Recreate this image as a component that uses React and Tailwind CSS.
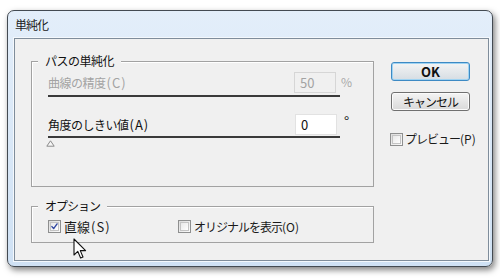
import React from "react";

const font = { fontFamily: '"Noto Sans CJK JP", "Noto Sans", sans-serif' };

function P({ children }) {
  return <span className="tracking-[1px] text-[13px] ml-[1px]">{children}</span>;
}

function Check({ checked, className = "" }) {
  return (
    <div className={"w-[13px] h-[13px] border border-[#8e8f8f] bg-gradient-to-br from-[#dcdcdc] to-[#fbfbfb] flex items-center justify-center shrink-0 " + className}>
      <div className="w-[9px] h-[9px] border border-[#c4c4c4] bg-gradient-to-br from-[#e8e8e8] to-[#ffffff] flex items-center justify-center">
        {checked && (
          <svg width="9" height="9" viewBox="0 0 9 9">
            <path d="M1.2 4.6 L3.4 7.2 L7.8 1.2" fill="none" stroke="#3047a0" strokeWidth="1.8" strokeLinecap="round" strokeLinejoin="round" />
          </svg>
        )}
      </div>
    </div>
  );
}

export default function App() {
  return (
    <div className="relative w-[500px] h-[280px] bg-white overflow-hidden pt-[10px] pl-[7px] text-[12px] text-[#1a1a1a]" style={font}>
      <div className="w-[486px] h-[257px] rounded-[7px] border border-[#434a52] bg-gradient-to-b from-[#e3eefa] to-[#cfe1f4] shadow-[2px_3px_6px_rgba(0,0,0,0.5)] flex flex-col pl-[6px] pr-[3px] pb-[5px]">
        <div className="h-[27px] flex items-center pl-[1px] tracking-[-1px] text-[#202020]">単純化</div>
        <div className="flex-1 border border-[#7f8d9b] bg-[#f0f0f0] flex shadow-[0_0_0_1px_#f4f8fc]">
          {/* left column */}
          <div className="pl-[16px] flex flex-col">
            <div className="mt-[22px] w-[343px] h-[126px] border border-[#a2a2a2] shadow-[inset_1px_1px_0_#ffffff]">
              <div className="-mt-[9px] ml-[6px] px-[7px] w-fit bg-[#f0f0f0] leading-[16px] tracking-[-0.5px] text-[#111]">パスの単純化</div>
              <div className="pl-[16px]">
                <div className="mt-[3px] flex items-center h-[21px]">
                  <div className="w-[246px] tracking-[-0.5px] text-[#a3a3a3]">曲線の精度<P>(C)</P></div>
                  <div className="w-[42px] h-[21px] border border-[#d6d6d6] bg-[#f0f0f0] pl-[5px] flex items-center text-[13px] text-[#a3a3a3]">50</div>
                  <div className="ml-[5px] text-[#a8a8a8] -mt-[2px]">%</div>
                </div>
                <div className="mt-[2px] w-[292px] h-[2px] bg-[#3a3a3a]" />
                <div className="mt-[17px] flex items-center h-[21px]">
                  <div className="w-[247px] tracking-[-0.5px] text-[#111]">角度のしきい値<P>(A)</P></div>
                  <div className="w-[42px] h-[21px] border border-[#e2e2e2] bg-white pl-[5px] flex items-center text-[13px] text-[#111]">0</div>
                  <div className="ml-[7px] -mt-[8px] text-[14px] leading-none text-[#222]">°</div>
                </div>
                <div className="mt-[1px] w-[292px] h-[2px] bg-[#3a3a3a]" />
                <svg className="mt-[2px] -ml-[2px]" width="9" height="7" viewBox="0 0 9 7">
                  <path d="M4.5 0.8 L8.2 6.2 L0.8 6.2 Z" fill="#f6f6f6" stroke="#8a8a8a" strokeWidth="1" />
                </svg>
              </div>
            </div>
            <div className="mt-[19px] w-[343px] h-[37px] border border-[#a2a2a2] shadow-[inset_1px_1px_0_#ffffff]">
              <div className="-mt-[9px] ml-[6px] px-[7px] w-fit bg-[#f0f0f0] leading-[16px] tracking-[-1px] text-[#111]">オプション</div>
              <div className="pl-[16px] mt-[3px] flex items-center">
                <div className="w-[130px] flex items-center">
                  <Check checked />
                  <span className="ml-[3px] text-[13px]">直線<P>(S)</P></span>
                </div>
                <div className="flex items-center">
                  <Check />
                  <span className="ml-[3px] tracking-[-1px]">オリジナルを表示<span className="tracking-[0px]">(O)</span></span>
                </div>
              </div>
            </div>
          </div>
          {/* right column */}
          <div className="ml-[17px] pt-[23px] flex flex-col">
            <div className="w-[79px] h-[19px] rounded-[3px] border border-[#3d8ac4] bg-gradient-to-b from-[#f4f4f4] to-[#d6dde3] shadow-[inset_0_0_0_1px_#9fd3f2] flex items-center justify-center font-semibold text-[13px] text-[#111]">OK</div>
            <div className="mt-[11px] w-[79px] h-[19px] rounded-[3px] border border-[#707070] bg-gradient-to-b from-[#f4f4f4] to-[#d9d9d9] shadow-[inset_0_0_0_1px_#fbfbfb] flex items-center justify-center tracking-[-1px] text-[#111]">キャンセル</div>
            <div className="mt-[19px] -ml-[1px] flex items-center">
              <Check />
              <span className="ml-[2px] tracking-[-1px]">プレビュー<span className="tracking-[0px]">(P)</span></span>
            </div>
          </div>
        </div>
      </div>
      {/* mouse cursor */}
      <svg className="absolute left-[73px] top-[238px]" width="15" height="22" viewBox="0 0 15 22">
        <path d="M1 1 L1 17 L4.8 13.4 L7.6 20 L10 19 L7.3 12.6 L12.6 12.6 Z" fill="#ffffff" stroke="#111" strokeWidth="1.1" strokeLinejoin="round" />
      </svg>
    </div>
  );
}
